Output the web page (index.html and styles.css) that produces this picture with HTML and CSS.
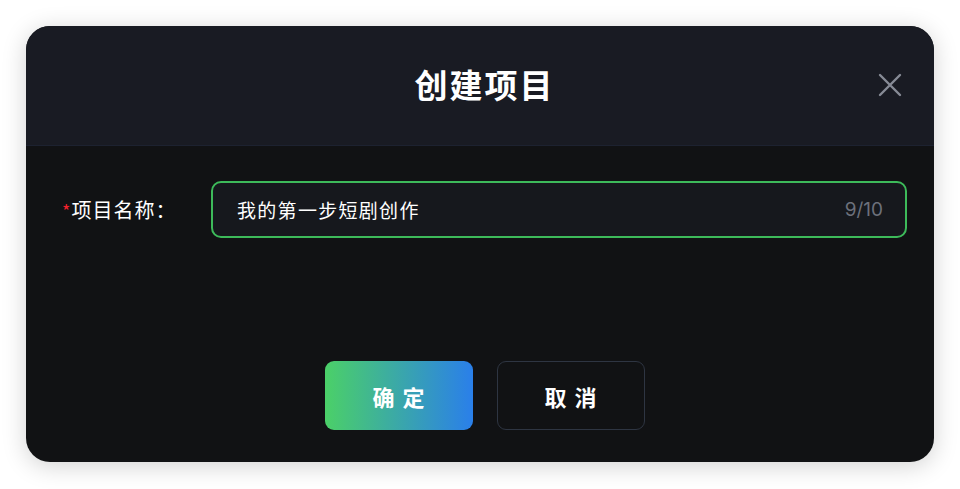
FILE: index.html
```html
<html>
<head>
<meta http-equiv="Content-Type" content="text/html; charset=utf-8">
<title>创建项目</title>
<link rel="stylesheet" href="styles.css">
</head>

<body>
<div class="dialog">
	<div class="dialog-head">
		<h2 class="dialog-title">创建项目</h2>
		<a class="dialog-close" href="#">
			<svg width="24" height="24" viewBox="0 0 24 24"><path d="M2 2L22 22M22 2L2 22" stroke="#878b96" stroke-width="2.4" stroke-linecap="round" fill="none"/></svg>
		</a>
	</div>
	<div class="dialog-body">
		<div class="form-row">
			<label class="form-label"><em>*</em>项目名称：</label>
			<div class="form-input">
				<span class="input-text">我的第一步短剧创作</span>
				<span class="input-count">9/10</span>
			</div>
		</div>
		<div class="dialog-foot">
			<a class="btn btn-ok" href="#">确定</a>
			<a class="btn btn-cancel" href="#">取消</a>
		</div>
	</div>
</div>
</body>
</html>
```

FILE: styles.css
```css
body{
	margin:0;
	padding:26px;
	background:#fff;
	font-family:"Noto Sans CJK SC","Noto Sans",sans-serif;
}
.dialog{
	width:908px;
	height:436px;
	border-radius:24px;
	overflow:hidden;
	background:#111214;
	box-shadow:0 4px 24px rgba(0,0,0,0.18);
	display:flex;
	flex-direction:column;
}
.dialog-head{
	height:119px;
	background:#191b23;
	border-bottom:1px solid #1d2230;
	display:flex;
	align-items:center;
	justify-content:center;
	position:relative;
}
.dialog-title{
	margin:0 0 4px 7px;
	color:#fff;
	font-size:33px;
	font-weight:700;
	letter-spacing:2px;
	text-indent:2px;
}
.dialog-close{
	position:absolute;
	right:32px;
	top:47px;
	width:24px;
	height:24px;
	display:block;
}
.dialog-close svg{
	display:block;
}
.dialog-body{
	flex:1;
	display:flex;
	flex-direction:column;
	padding:35px 27px 32px 36px;
}
.form-row{
	display:flex;
	align-items:center;
}
.form-label{
	width:149px;
	color:#fff;
	font-size:20px;
	letter-spacing:1px;
}
.form-label em{
	color:#f5222d;
	font-style:normal;
	font-size:18px;
	margin-right:0;
}
.form-input{
	flex:1;
	height:53px;
	border:2px solid #3dba5a;
	border-radius:10px;
	background:#16181d;
	display:flex;
	align-items:center;
	justify-content:space-between;
	padding:0 22px 0 24px;
}
.input-text{
	color:#fff;
	font-size:19px;
	letter-spacing:1.3px;
}
.input-count{
	color:#6c707b;
	font-size:19px;
	font-family:"Inter","Noto Sans",sans-serif;
}
.dialog-foot{
	margin-top:auto;
	display:flex;
	justify-content:center;
	gap:24px;
}
.btn{
	width:148px;
	height:69px;
	box-sizing:border-box;
	border-radius:9px;
	display:flex;
	align-items:center;
	justify-content:center;
	color:#fff;
	font-size:22px;
	font-weight:700;
	letter-spacing:8px;
	text-indent:8px;
	text-decoration:none;
}
.btn-ok{
	background:linear-gradient(90deg,#4bd068,#2a7fea);
}
.btn-cancel{
	border:1.5px solid #2e3542;
	background:#111214;
}
```
